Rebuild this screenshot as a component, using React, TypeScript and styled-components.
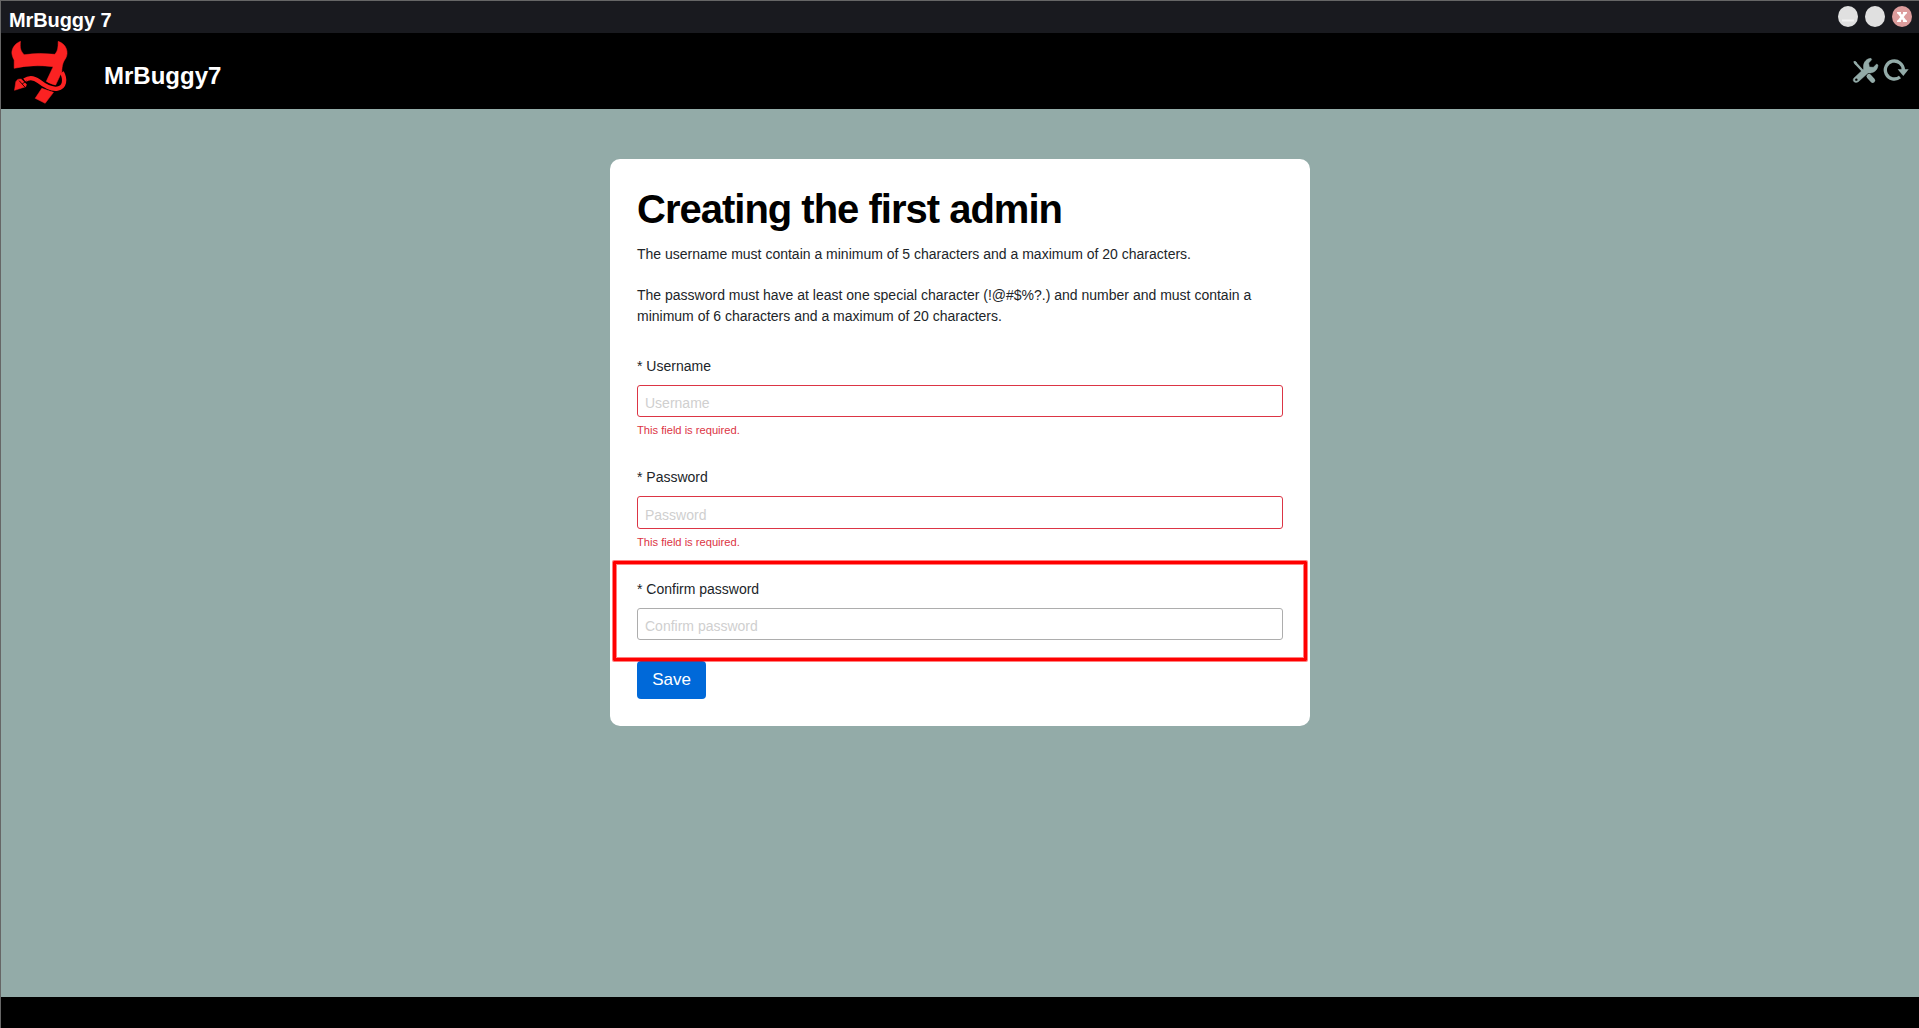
import React from "react";
import styled, { createGlobalStyle } from "styled-components";

const GlobalStyle = createGlobalStyle`
  * { box-sizing: border-box; }
  html, body { margin: 0; padding: 0; }
  body { background: #000; overflow: hidden; }
`;

const Window = styled.div`
  display: flex;
  flex-direction: column;
  height: 100vh;
  border-top: 1px solid #666;
  border-left: 1px solid #666;
  background: #000;
  font-family: "Liberation Sans", Arial, Helvetica, sans-serif;
`;

const TitleBar = styled.div`
  display: flex;
  flex: none;
  justify-content: space-between;
  align-items: flex-start;
  height: 32px;
  padding: 0 7px 0 8px;
  background: #191a1f;
`;

const WindowTitle = styled.div`
  padding-top: 8px;
  color: #fff;
  font-size: 20px;
  font-weight: 700;
  letter-spacing: -0.1px;
  line-height: 23px;
`;

const WindowControls = styled.div`
  display: flex;
  gap: 7px;
  padding-top: 5px;
`;

const ControlButton = styled.button<{ $close?: boolean }>`
  display: flex;
  align-items: center;
  justify-content: center;
  width: 20px;
  height: 21px;
  padding: 0;
  border: 0;
  border-radius: 50%;
  background: ${(p) => (p.$close ? "#dc9c9c" : "#e0e0e0")};
`;

const Header = styled.header`
  display: flex;
  flex: none;
  height: 76px;
  background: #000;
`;

const AppName = styled.div`
  flex: 1;
  padding: 29px 0 0 24px;
  color: #fff;
  font-size: 24px;
  font-weight: 700;
  line-height: 28px;
`;

const HeaderTools = styled.div`
  display: flex;
  gap: 4px;
  padding: 24px 10px 0 0;
`;

const Main = styled.main`
  display: flex;
  flex: 1;
  justify-content: center;
  align-items: flex-start;
  padding-top: 50px;
  background: #93aba8;
`;

const Footer = styled.footer`
  flex: none;
  height: 31px;
  background: #000;
`;

const Card = styled.form`
  position: relative;
  display: flex;
  flex-direction: column;
  align-items: flex-start;
  width: 700px;
  height: 567px;
  padding: 26px 27px;
  border-radius: 10px;
  background: #fff;
`;

const Heading = styled.h1`
  margin: 0;
  color: #000;
  font-size: 40px;
  font-weight: 700;
  letter-spacing: -1px;
  line-height: 48px;
`;

const Note = styled.p<{ $gap: number }>`
  margin: ${(p) => p.$gap}px 0 0;
  color: #212529;
  font-size: 14px;
  line-height: 21px;
`;

const Field = styled.div<{ $gap: number }>`
  display: flex;
  flex-direction: column;
  width: 100%;
  margin-top: ${(p) => p.$gap}px;
`;

const Label = styled.label`
  color: #212529;
  font-size: 14px;
  line-height: 21px;
`;

const Input = styled.input<{ $invalid?: boolean; $height?: number }>`
  width: 100%;
  height: ${(p) => p.$height ?? 32}px;
  margin-top: 8px;
  padding: 5px 7px 1px;
  border: 1px solid ${(p) => (p.$invalid ? "#dc3545" : "#adadad")};
  border-radius: 3px;
  outline: 0;
  background: #fff;
  font-family: inherit;
  font-size: 14px;
  &::placeholder {
    color: #cfcfcf;
    opacity: 1;
  }
`;

const ErrorText = styled.div`
  margin-top: 5px;
  color: #dc3545;
  font-size: 11.2px;
  letter-spacing: -0.02px;
  line-height: 17px;
`;

const SaveButton = styled.button`
  width: 69px;
  height: 38px;
  margin-top: 21px;
  padding: 0;
  border: 0;
  border-radius: 4px;
  background: #0069d9;
  color: #fff;
  font-family: inherit;
  font-size: 17px;
  line-height: 24px;
`;

/* Marker frame drawn over the form */
const Highlight = styled.div`
  position: absolute;
  top: 402px;
  left: 3px;
  width: 694px;
  height: 100px;
  border: 3px solid #f00;
  border-radius: 1px;
  box-shadow: 0 0 0 1px rgba(255, 0, 0, 0.5), inset 0 0 0 1px rgba(255, 0, 0, 0.5);
  pointer-events: none;
`;

const Logo = () => (
  <svg width="79" height="76" viewBox="1.5 -5 237 228">
    <g fill="#fb2222" stroke="#fb2222" strokeWidth="1.5">
      <path d="M60 20C40 28 31 47 35 61Q37 70 41 76L41 101Q95 88 158 96L136 143L165 152L184 112C184 92 189 79 195 72C206 54 198 28 173 20C173 38 172 50 163 59Q115 53 71 60C60 49 58 40 60 20Z" />
      <path d="M124 161L159 173L134 206L104 191Z" />
      <path d="M42 167L46 141Q50 131 62 133L78 149L76 156Z" />
    </g>
    <path
      d="M80 134C98 126 110 131 120 139C138 153 154 164 171 161C192 158 197 136 186 119"
      fill="none"
      stroke="#000"
      strokeWidth="18"
    />
    <path
      d="M72 137C86 127 102 130 115 140C134 155 153 165 171 162C193 158 196 134 184 113"
      fill="none"
      stroke="#fb2222"
      strokeWidth="13"
    />
    <path d="M56 138L73 157M65 148L78 139" stroke="#000" strokeWidth="2.5" />
  </svg>
);

const ToolsIcon = () => (
  <svg width="27" height="27" viewBox="99 171 81 81">
    <path d="M108 188L134 216" stroke="#93aba8" strokeWidth="7" />
    <path d="M103 186Q104 182 109 183L114 188L113 193L109 194Z" fill="#93aba8" />
    <path d="M150 229L161 241" stroke="#93aba8" strokeWidth="15" strokeLinecap="round" />
    <path
      d="M105 234L134 207C131 190 140 176 156 175L158 179L149 189L151 201L163 202L173 192L177 195C176 212 163 220 147 219L118 245C108 252 98 242 105 234Z"
      fill="#93aba8"
      stroke="#93aba8"
      strokeWidth="1.5"
    />
    <circle cx="112" cy="239" r="3.6" fill="#000" />
  </svg>
);

const ReloadIcon = () => (
  <svg width="26" height="27" viewBox="192 171 78 81">
    <path
      d="M243 231A27 27 0 1 1 253 210"
      fill="none"
      stroke="#93aba8"
      strokeWidth="10"
    />
    <path d="M236 208H269L253 228Z" fill="#93aba8" />
  </svg>
);

export default function App() {
  return (
    <>
      <GlobalStyle />
      <Window>
        <TitleBar>
          <WindowTitle>MrBuggy 7</WindowTitle>
          <WindowControls>
            <ControlButton type="button" aria-label="Minimize">
              <svg width="12" height="12" viewBox="0 0 12 12">
                <path d="M0 9.5H12" stroke="#f3f3f3" strokeWidth="2" />
              </svg>
            </ControlButton>
            <ControlButton type="button" aria-label="Maximize" />
            <ControlButton type="button" aria-label="Close" $close>
              <svg width="10" height="10" viewBox="0 0 10 10">
                <path d="M1.5 .5L8.5 9.5M8.5 .5L1.5 9.5" stroke="#fff" strokeWidth="2.8" />
                <path d="M0 .8H4M6 .8H10M0 9.2H4M6 9.2H10" stroke="#fff" strokeWidth="1.4" />
              </svg>
            </ControlButton>
          </WindowControls>
        </TitleBar>
        <Header>
          <Logo />
          <AppName>MrBuggy7</AppName>
          <HeaderTools>
            <ToolsIcon />
            <ReloadIcon />
          </HeaderTools>
        </Header>
        <Main>
          <Card>
            <Heading>Creating the first admin</Heading>
            <Note $gap={11}>
              The username must contain a minimum of 5 characters and a maximum of 20 characters.
            </Note>
            <Note $gap={20}>
              The password must have at least one special character (!@#$%?.) and number and must
              contain a minimum of 6 characters and a maximum of 20 characters.
            </Note>
            <Field $gap={29}>
              <Label htmlFor="username">* Username</Label>
              <Input id="username" placeholder="Username" $invalid />
              <ErrorText>This field is required.</ErrorText>
            </Field>
            <Field $gap={28}>
              <Label htmlFor="password">* Password</Label>
              <Input id="password" type="password" placeholder="Password" $invalid $height={33} />
              <ErrorText>This field is required.</ErrorText>
            </Field>
            <Field $gap={28}>
              <Label htmlFor="confirm">* Confirm password</Label>
              <Input id="confirm" type="password" placeholder="Confirm password" />
            </Field>
            <SaveButton type="button">Save</SaveButton>
            <Highlight />
          </Card>
        </Main>
        <Footer />
      </Window>
    </>
  );
}
